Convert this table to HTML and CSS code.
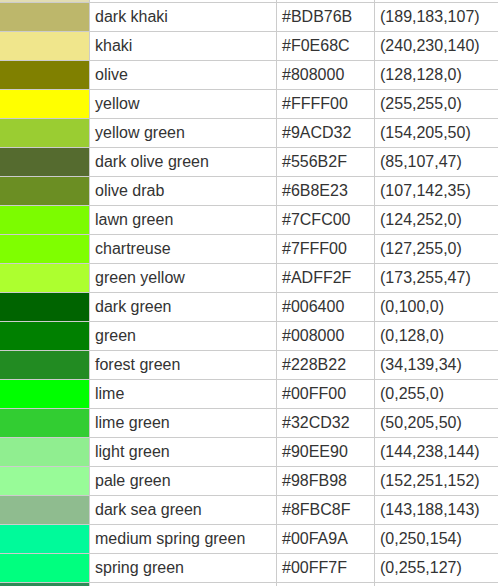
FILE: index.html
```html
<!DOCTYPE html>
<html>
<head>
<meta charset="utf-8">
<link rel="stylesheet" href="styles.css">
</head>
<body>
<table class="colors">
<colgroup><col class="c-swatch"><col class="c-name"><col class="c-hex"><col class="c-rgb"></colgroup>
<tbody>
<tr><td class="swatch" style="background:#E2DDB4"></td><td></td><td></td><td></td></tr>
<tr><td class="swatch" style="background:#BDB76B"></td><td>dark khaki</td><td>#BDB76B</td><td>(189,183,107)</td></tr>
<tr><td class="swatch" style="background:#F0E68C"></td><td>khaki</td><td>#F0E68C</td><td>(240,230,140)</td></tr>
<tr><td class="swatch" style="background:#808000"></td><td>olive</td><td>#808000</td><td>(128,128,0)</td></tr>
<tr><td class="swatch" style="background:#FFFF00"></td><td>yellow</td><td>#FFFF00</td><td>(255,255,0)</td></tr>
<tr><td class="swatch" style="background:#9ACD32"></td><td>yellow green</td><td>#9ACD32</td><td>(154,205,50)</td></tr>
<tr><td class="swatch" style="background:#556B2F"></td><td>dark olive green</td><td>#556B2F</td><td>(85,107,47)</td></tr>
<tr><td class="swatch" style="background:#6B8E23"></td><td>olive drab</td><td>#6B8E23</td><td>(107,142,35)</td></tr>
<tr><td class="swatch" style="background:#7CFC00"></td><td>lawn green</td><td>#7CFC00</td><td>(124,252,0)</td></tr>
<tr><td class="swatch" style="background:#7FFF00"></td><td>chartreuse</td><td>#7FFF00</td><td>(127,255,0)</td></tr>
<tr><td class="swatch" style="background:#ADFF2F"></td><td>green yellow</td><td>#ADFF2F</td><td>(173,255,47)</td></tr>
<tr><td class="swatch" style="background:#006400"></td><td>dark green</td><td>#006400</td><td>(0,100,0)</td></tr>
<tr><td class="swatch" style="background:#008000"></td><td>green</td><td>#008000</td><td>(0,128,0)</td></tr>
<tr><td class="swatch" style="background:#228B22"></td><td>forest green</td><td>#228B22</td><td>(34,139,34)</td></tr>
<tr><td class="swatch" style="background:#00FF00"></td><td>lime</td><td>#00FF00</td><td>(0,255,0)</td></tr>
<tr><td class="swatch" style="background:#32CD32"></td><td>lime green</td><td>#32CD32</td><td>(50,205,50)</td></tr>
<tr><td class="swatch" style="background:#90EE90"></td><td>light green</td><td>#90EE90</td><td>(144,238,144)</td></tr>
<tr><td class="swatch" style="background:#98FB98"></td><td>pale green</td><td>#98FB98</td><td>(152,251,152)</td></tr>
<tr><td class="swatch" style="background:#8FBC8F"></td><td>dark sea green</td><td>#8FBC8F</td><td>(143,188,143)</td></tr>
<tr><td class="swatch" style="background:#00FA9A"></td><td>medium spring green</td><td>#00FA9A</td><td>(0,250,154)</td></tr>
<tr><td class="swatch" style="background:#00FF7F"></td><td>spring green</td><td>#00FF7F</td><td>(0,255,127)</td></tr>
<tr><td class="swatch" style="background:#2E8B57"></td><td></td><td></td><td></td></tr>
</tbody>
</table>
</body>
</html>
```
FILE: styles.css
```css
html, body {
  margin: 0;
  padding: 0;
  background: #fff;
  overflow: hidden;
}
.colors {
  border-collapse: collapse;
  table-layout: fixed;
  width: 600px;
  margin-top: -27px;
  margin-left: -1px;
  font-family: "Liberation Sans", Arial, sans-serif;
  font-size: 16px;
  line-height: 18px;
  color: #333;
}
.c-swatch { width: 90px; }
.c-name { width: 187px; }
.c-hex { width: 98px; }
.c-rgb { width: 225px; }
.colors td {
  border: 1px solid #ccc;
  padding: 5px 5px;
  height: 18px;
  white-space: nowrap;
  text-align: left;
}
.colors td.swatch {
  padding: 0;
}
```
